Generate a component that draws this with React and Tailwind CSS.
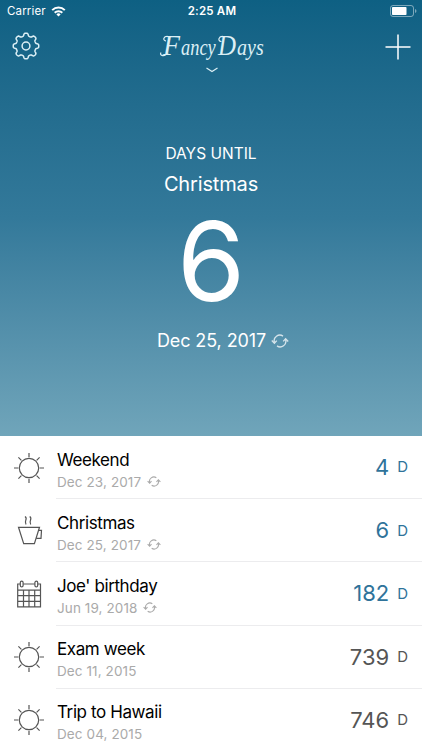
import React from "react";

const events = [
  { icon: "sun", title: "Weekend", date: "Dec 23, 2017", repeat: true, days: 4 },
  { icon: "cup", title: "Christmas", date: "Dec 25, 2017", repeat: true, days: 6 },
  { icon: "calendar", title: "Joe' birthday", date: "Jun 19, 2018", repeat: true, days: 182 },
  { icon: "sun", title: "Exam week", date: "Dec 11, 2015", past: true, days: 739 },
  { icon: "sun", title: "Trip to Hawaii", date: "Dec 04, 2015", past: true, days: 746 },
];

// Gear outline, eight soft teeth
const gearPath =
  Array.from({ length: 160 }, (_, i) => {
    const a = (i / 160) * Math.PI * 2;
    const r = 11.4 + 1.4 * Math.tanh(2.2 * Math.cos(8 * a));
    return `${i ? "L" : "M"}${(14 + r * Math.cos(a)).toFixed(2)} ${(14 + r * Math.sin(a)).toFixed(2)}`;
  }).join("") + "Z";

const Gear = () => (
  <svg className="h-7 w-7" viewBox="0 0 28 28" fill="none" stroke="currentColor" strokeWidth="1.5" strokeLinejoin="round">
    <path d={gearPath} />
    <circle cx="14" cy="14" r="3.9" />
  </svg>
);

// Wordmark: real text with a few flourishes on the capitals
const Logo = () => (
  <svg
    className="h-[34px] w-[110px] font-['Liberation_Serif',serif] italic"
    viewBox="0 0 110 34"
    fill="currentColor"
    role="img"
    aria-label="FancyDays"
  >
    <text fontSize="29" transform="translate(6 25) scale(.96 1)">F</text>
    <text fontSize="23" transform="translate(24 25) scale(.8 1)">ancy</text>
    <text fontSize="29" transform="translate(61 25) scale(.86 1)">D</text>
    <text fontSize="23" transform="translate(80 25) scale(.87 1)">ays</text>
    <g fill="none" stroke="currentColor" strokeWidth="1.2" strokeLinecap="round">
      <path d="M11 6.500C6.500 6 5.500 10 8.500 10.800M9 24.500C6.500 26.500 2.500 25.500 3.800 23" />
      <path d="M66 6.500C61.500 6 60.500 11 64 11.500" />
    </g>
  </svg>
);

const Repeat = ({ className }) => (
  <svg className={className} viewBox="0 0 18 14" fill="none" stroke="currentColor" strokeWidth="1.4">
    <path d="M14.600 5.500A5.700 5.700 0 0 1 6 11.900M3.400 8.500A5.700 5.700 0 0 1 12 2.100" />
    <path d="M12.200 7.400l2.400-2.600 2.600 2.600M.8 6.600l2.600 2.600 2.400-2.600" />
  </svg>
);

const Sun = () => (
  <svg className="h-[30px] w-[30px]" viewBox="0 0 30 30" fill="none" stroke="currentColor" strokeWidth="1.2">
    <circle cx="15" cy="15" r="9.700" />
    <path d="M15 0v4.300M15 25.700V30M0 15h4.300M25.700 15H30M4.400 4.400l3 3M22.600 22.600l3 3M25.600 4.400l-3 3M7.400 22.600l-3 3" />
  </svg>
);

const Cup = () => (
  <svg className="h-[30px] w-[30px]" viewBox="0 0 30 30" fill="none" stroke="currentColor" strokeWidth="1.2">
    <path d="M4.500 11.300h21L20.400 27.700H9.700Z" />
    <path d="M25 14.300H27.500L27 22.300h-4.800" />
    <path d="M11 .5c3.500 2.500-1.500 4 1 8M15.700 .5c3.500 2.500-1.500 4 1 8" />
  </svg>
);

const Calendar = () => (
  <svg className="h-[30px] w-[30px]" viewBox="0 0 30 30" fill="none" stroke="currentColor" strokeWidth="1.2">
    <path d="M6 5H3.700V27.800h22.800V5H24M9.200 5h11.600M3.700 11.200h22.800M3.700 16.700h22.800M3.700 22.300h22.800M9.500 11.200v16.600M15 11.200v16.600M20.700 11.200v16.600" />
    <rect x="6.300" y="2.200" width="2.800" height="5.800" rx="1.400" />
    <rect x="20.900" y="2.200" width="2.800" height="5.800" rx="1.400" />
  </svg>
);

const icons = { sun: Sun, cup: Cup, calendar: Calendar };

const StatusBar = () => (
  <div className="grid h-[22px] grid-cols-3 items-center pl-[7px] pr-[5px] text-[11.5px]">
    <div className="flex items-center gap-[5px]">
      <span className="pt-px tracking-[0.15px]">Carrier</span>
      <svg className="h-[11px] w-[15px]" viewBox="0 0 15 11" fill="none" stroke="currentColor" strokeWidth="2">
        <path d="M1.200 4.100a9 9 0 0 1 12.600 0M3.700 6.700a5.400 5.400 0 0 1 7.600 0" />
        <path d="M5.400 8.400a3 3 0 0 1 4.200 0L7.500 10.600Z" fill="currentColor" stroke="none" />
      </svg>
    </div>
    <div className="pt-px text-center font-semibold tracking-[0.2px]">2:25 AM</div>
    <svg className="h-3 w-[27px] justify-self-end" viewBox="0 0 27 12" fill="none">
      <rect x=".5" y=".5" width="23" height="11" rx="2.500" stroke="white" strokeOpacity=".45" />
      <rect x="2" y="2" width="14.500" height="8" rx=".8" fill="white" />
      <path d="M25 4v4c2-.8 2-3.200 0-4Z" fill="white" fillOpacity=".45" />
    </svg>
  </div>
);

const EventRow = ({ event }) => {
  const Icon = icons[event.icon];
  return (
    <div className="flex h-[63.2px] shrink-0 pl-[14px]">
      <div className="flex w-[42px] items-center text-[#555]">
        <Icon />
      </div>
      <div className="flex flex-1 items-center justify-between border-b border-[#ececee] pr-[14px]">
        <div className="pl-px pt-[8px]">
          <div className="text-[17px] leading-[21px] tracking-[-0.4px] text-black">{event.title}</div>
          <div className="flex items-center gap-[6px] text-[13.5px] leading-[22px] tracking-[0.1px] text-[#aaa]">
            {event.date}
            {event.repeat && <Repeat className="h-[11px] w-[14px]" />}
          </div>
        </div>
        <div className={`flex items-center gap-[8px] pt-px ${event.past ? "text-[#555]" : "text-[#2f739a]"}`}>
          <span className="text-[22px]">{event.days}</span>
          <span className="text-[15px]">D</span>
        </div>
      </div>
    </div>
  );
};

const App = () => {
  return (
    <div className="flex h-[750px] w-[422px] flex-col overflow-hidden bg-white font-['Inter','Liberation_Sans',sans-serif]">
      <div className="h-[436px] shrink-0 bg-linear-to-b from-[#0e6083] via-[#33799a] to-[#70a5ba] text-white">
        <StatusBar />
        <div className="grid h-[58px] grid-cols-3 pl-3 pr-[11px]">
          <div className="pt-[10px] text-[#dceff5]">
            <Gear />
          </div>
          <div className="flex flex-col items-center text-[#dceff5]">
            <h1 className="h-[45px] pt-[8px]">
              <Logo />
            </h1>
            <svg className="h-[6px] w-3" viewBox="0 0 12 6" fill="none" stroke="currentColor" strokeWidth="1.200">
              <path d="M.5 1 6 4.500 11.500 1" />
            </svg>
          </div>
          <svg className="mt-[12px] h-[26px] w-[26px] justify-self-end" viewBox="0 0 26 26" stroke="white" strokeWidth="1.500">
            <path d="M13 .5v25M.5 13h25" />
          </svg>
        </div>
        <div className="flex flex-col items-center pt-[64px]">
          <div className="text-[15.5px] leading-5">DAYS UNTIL</div>
          <div className="mt-[8px] text-[20px] leading-6 tracking-[-0.15px]">Christmas</div>
          <div className="mt-[9px] text-[110px] leading-[112px]">6</div>
          <div className="mt-[12px] flex items-center gap-[5px] pl-[24px] text-[18px] leading-6 tracking-[-0.1px]">
            Dec 25, 2017
            <Repeat className="h-[14px] w-[18px] opacity-75" />
          </div>
        </div>
      </div>
      {events.map((event) => (
        <EventRow key={event.title} event={event} />
      ))}
    </div>
  );
};

export default App;
